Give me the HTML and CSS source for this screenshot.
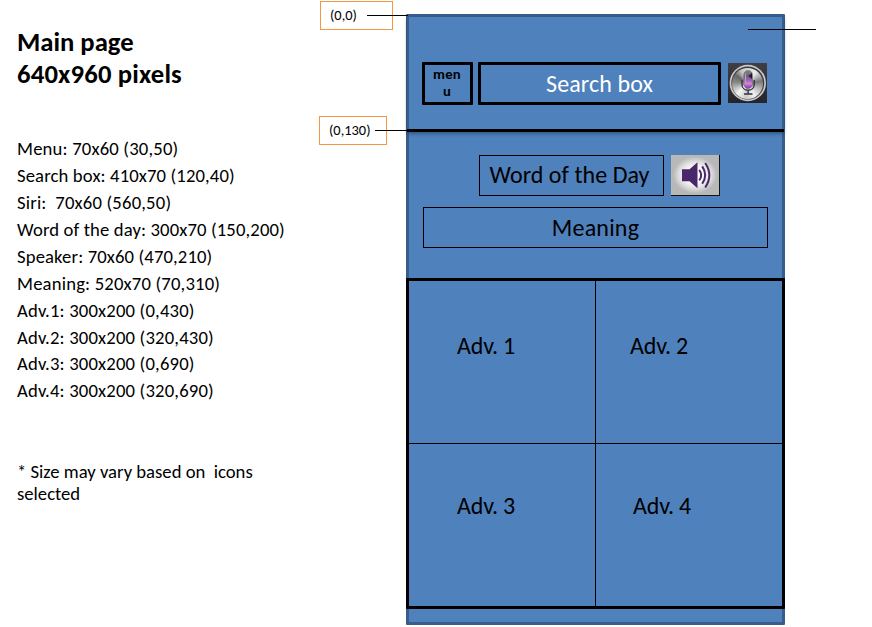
FILE: index.html
```html
<!DOCTYPE html>
<html lang="en">
<head>
<meta charset="utf-8">
<title>Main page wireframe</title>
<link rel="stylesheet" href="styles.css">
</head>
<body>
<main class="page">
  <section class="notes">
    <h1>Main page<br><span class="wide">640x960 pixels</span></h1>
    <ul class="sizes">
      <li>Menu: 70x60 (30,50)</li>
      <li class="tight">Search box: 410x70 (120,40)</li>
      <li>Siri:&nbsp; 70x60 (560,50)</li>
      <li class="tight">Word of the day: 300x70 (150,200)</li>
      <li class="tight">Speaker: 70x60 (470,210)</li>
      <li>Meaning: 520x70 (70,310)</li>
      <li>Adv.1: 300x200 (0,430)</li>
      <li>Adv.2: 300x200 (320,430)</li>
      <li>Adv.3: 300x200 (0,690)</li>
      <li>Adv.4: 300x200 (320,690)</li>
    </ul>
    <p class="footnote">* Size may vary based on&nbsp; icons<br>selected</p>
  </section>

  <section class="phone">
    <header class="top">
      <div class="menu"><span>men</span><span>u</span></div>
      <div class="search">Search box</div>
      <svg class="mic" width="39" height="40" viewBox="0 0 39 40">
        <defs>
          <linearGradient id="plate" x1="0" y1="0" x2="0" y2="1"><stop offset="0" stop-color="#413e43"/><stop offset="1" stop-color="#25242a"/></linearGradient>
          <linearGradient id="capsule" x1="0" y1="0" x2="0" y2="1"><stop offset="0" stop-color="#888"/><stop offset=".3" stop-color="#66606f"/><stop offset=".55" stop-color="#a45bd0"/><stop offset=".72" stop-color="#d987c4"/><stop offset="1" stop-color="#7631d8"/></linearGradient>
        </defs>
        <rect width="39" height="40" fill="url(#plate)"/>
        <circle cx="19.8" cy="20" r="18.2" fill="#c9c9c9"/>
        <circle cx="19.8" cy="20" r="16.5" fill="#3c3c3e"/>
        <foreignObject x="4.3" y="4.5" width="31" height="31"><div class="metal"></div></foreignObject>
        <rect x="15.8" y="7.5" width="8.6" height="18" rx="4.3" fill="url(#capsule)" stroke="#77727c" stroke-width=".8"/>
        <path d="M20.5 13 24 10v6Z" fill="#211b2d"/>
        <path d="M17.5 10.5v9" stroke="#aaa" stroke-width="1.2"/>
        <path d="M14 17v4.5c0 7.7 12.2 7.7 12.2 0V17M20.1 27.5v3M16 31h8.5" fill="none" stroke="#36343a" stroke-width="1.4"/>
      </svg>
    </header>
    <div class="daily">
      <div class="word-row">
        <div class="word">Word of the Day</div>
        <div class="speaker">
          <svg width="48" height="40" viewBox="0 0 48 40">
            <path d="M11 14.2h7.5l8-7v26l-8-7H11Z" fill="#48286b"/>
            <path d="M28.2 14.8q4 5.2 0 10.6M31.2 11.4q6 8.7 0 17.4M34.2 8q8.3 12.2 0 24.5" fill="none" stroke="#48286b" stroke-width="2"/>
          </svg>
        </div>
      </div>
      <div class="meaning">Meaning</div>
    </div>
    <div class="ads">
      <div class="ad a1">Adv. 1</div>
      <div class="ad a2">Adv. 2</div>
      <div class="ad a3">Adv. 3</div>
      <div class="ad a4">Adv. 4</div>
    </div>
  </section>

  <div class="callout origin">(0,0)</div>
  <div class="callout divider">(0,130)</div>
  <div class="leader"></div>
</main>
</body>
</html>
```
FILE: styles.css
```css
* { box-sizing: border-box; }
body {
  margin: 0;
  background: #fff;
  color: #000;
  font-family: Carlito, Lato, "Open Sans", sans-serif;
}
.page {
  position: relative;
  display: flex;
  width: 872px;
  height: 627px;
  overflow: hidden;
}
.notes {
  width: 406px;
  padding: 26px 0 0 17px;
  white-space: nowrap;
}
h1 { margin: 0; font-size: 26.67px; line-height: 32px; }
.wide { letter-spacing: .18px; }
.sizes {
  list-style: none;
  margin: 46.2px 0 0;
  padding: 0;
  font-size: 18.67px;
  line-height: 26.9px;
  letter-spacing: .18px;
}
.tight { letter-spacing: .13px; }
.footnote { margin: 55.8px 0 0; font-size: 18.67px; line-height: 22px; }

.phone {
  width: 379px;
  height: 611px;
  margin-top: 14px;
  background: #4f81bd;
  border: 3px solid #385d8a;
  border-radius: 1px;
}
.top {
  position: relative;
  display: flex;
  height: 115px;
  margin: 0 -2px;
  padding: 45px 0 0 15px;
  border-bottom: 3px solid #000;
  box-shadow: 0 2px 3px rgba(30, 50, 80, .5);
}
.menu, .search { height: 43px; border: 3px solid #000; border-radius: 1px; }
.menu {
  display: flex;
  flex-direction: column;
  align-items: center;
  width: 51px;
  padding: 1px 1px 0 0;
  font-size: 14.67px;
  font-weight: bold;
  line-height: 17px;
  letter-spacing: .2px;
}
.search {
  width: 243px;
  margin-left: 5px;
  color: #fff;
  font-size: 24px;
  line-height: 37px;
  letter-spacing: .1px;
  text-align: center;
}
.mic { margin: 1px 0 0 7px; }
.metal {
  width: 31px;
  height: 31px;
  border-radius: 50%;
  background: conic-gradient(#d5d5d5, #eee 35deg, #777 80deg, #bbb 115deg, #f2f2f2 150deg, #ccc 185deg, #f4f4f4 225deg, #888 275deg, #666 305deg, #c8c8c8 335deg, #d5d5d5);
}
.daily { height: 146px; padding: 23px 14px 0; }
.word-row { display: flex; padding-left: 56px; }
.word, .meaning {
  height: 41px;
  border: 1px solid #000;
  font-size: 24px;
  line-height: 39px;
  text-align: center;
}
.word { width: 185px; padding-right: 4px; line-height: 37px; letter-spacing: .05px; }
.meaning { margin-top: 11px; letter-spacing: .2px; }
.speaker {
  width: 49px;
  height: 41px;
  margin-left: 7px;
  border: solid #10131a;
  border-width: 0 1px 1px 0;
  background: radial-gradient(ellipse at center, #fff 25%, #ddd 48%, #b8b8b8 65%);
}
.speaker svg { display: block; }
.ads {
  display: grid;
  grid-template-columns: 187px 186px;
  grid-template-rows: 163px 162px;
  height: 331px;
  margin: 0 -3px;
  border: 3px solid #000;
  border-radius: 1px;
}
.ad {
  padding: 52px 0 0 48px;
  font-size: 24px;
  line-height: 26px;
  letter-spacing: -.15px;
}
.a1, .a3 { border-right: 1px solid #000; }
.a1, .a2 { border-bottom: 1px solid #000; }
.a2 { padding-left: 34px; }
.a3, .a4 { padding-top: 49px; }
.a4 { padding-left: 37px; }

.callout {
  position: absolute;
  height: 29px;
  border: 1px solid #f79646;
  font-size: 14.4px;
  line-height: 27px;
  padding-left: 9px;
}
.callout::after {
  content: "";
  position: absolute;
  top: 13px;
  height: 1px;
  background: #000;
}
.origin { left: 320px; top: 1px; width: 73px; }
.origin::after { left: 46px; width: 41px; }
.divider { left: 319px; top: 116px; width: 68px; }
.divider::after { left: 55px; width: 34px; }
.leader {
  position: absolute;
  left: 748px;
  top: 29px;
  width: 68px;
  height: 1px;
  background: #000;
}
```
